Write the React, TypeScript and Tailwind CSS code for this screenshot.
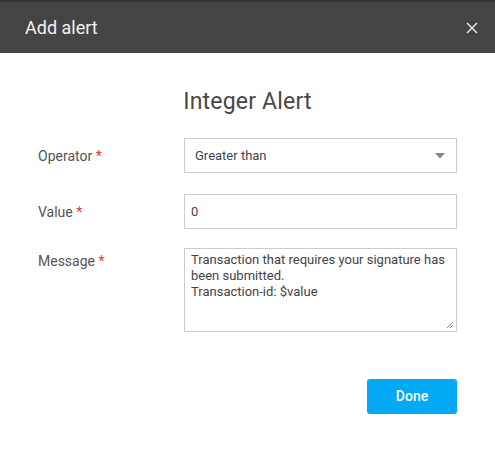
const font = { fontFamily: "Roboto, 'Liberation Sans', sans-serif" };

function Label({ text }: { text: string }) {
  return (
    <span className="text-[14px] text-[#555]">
      {text} <span className="text-[#e53935]">*</span>
    </span>
  );
}

export default function App() {
  return (
    <div className="w-[495px] h-[449px] bg-white" style={font}>
      {/* Title bar */}
      <div className="h-[53px] bg-[#444] border-t-2 border-[#363636] flex items-center justify-between pl-[25px] pr-[17px]">
        <span className="text-[18px] text-[#f2f2f2]">Add alert</span>
        <button className="text-[#eee]">
          <svg width="12" height="12" viewBox="0 0 12 12" stroke="currentColor" strokeWidth="1.4">
            <path d="M1 1l10 10M11 1L1 11" />
          </svg>
        </button>
      </div>

      <div className="px-[38px]">
        <h2 className="text-center text-[23px] leading-[26px] text-[#474747] pt-[36px] pb-[23px] tracking-[0.2px]">
          Integer Alert
        </h2>

        <div className="flex flex-col">
          <div className="flex items-center">
            <div className="w-[146px]">
              <Label text="Operator" />
            </div>
            <div className="relative w-[273px] h-[35px] border border-[#ccc] flex items-center pl-[10px]">
              <span className="text-[13px] text-[#444]">Greater than</span>
              <svg className="absolute right-[11px] top-[14px]" width="10" height="6" viewBox="0 0 10 6">
                <path d="M0 0h10L5 5.5z" fill="#888" />
              </svg>
            </div>
          </div>

          <div className="flex items-center mt-[21px]">
            <div className="w-[146px]">
              <Label text="Value" />
            </div>
            <div className="w-[273px] h-[35px] border border-[#ccc] flex items-center pl-[6px]">
              <span className="text-[13px] text-[#444]">0</span>
            </div>
          </div>

          <div className="flex items-start mt-[19px]">
            <div className="w-[146px] pt-[1px]">
              <Label text="Message" />
            </div>
            <div className="relative w-[273px] h-[84px] border border-[#ccc] px-[6px] pt-[3px]">
              <p className="text-[13px] leading-[16px] text-[#444]">
                Transaction that requires your signature has been submitted.
                <br />
                Transaction-id: $value
              </p>
              <svg className="absolute right-[2px] bottom-[2px]" width="8" height="8" viewBox="0 0 8 8" stroke="#888" strokeWidth="1">
                <path d="M7 1L1 7M7 4L4 7" />
              </svg>
            </div>
          </div>
        </div>

        <div className="flex justify-end pt-[47px]">
          <button className="w-[90px] h-[35px] rounded-[3px] bg-[#03a9f4] text-white text-[14px] font-medium">
            Done
          </button>
        </div>
      </div>
    </div>
  );
}
